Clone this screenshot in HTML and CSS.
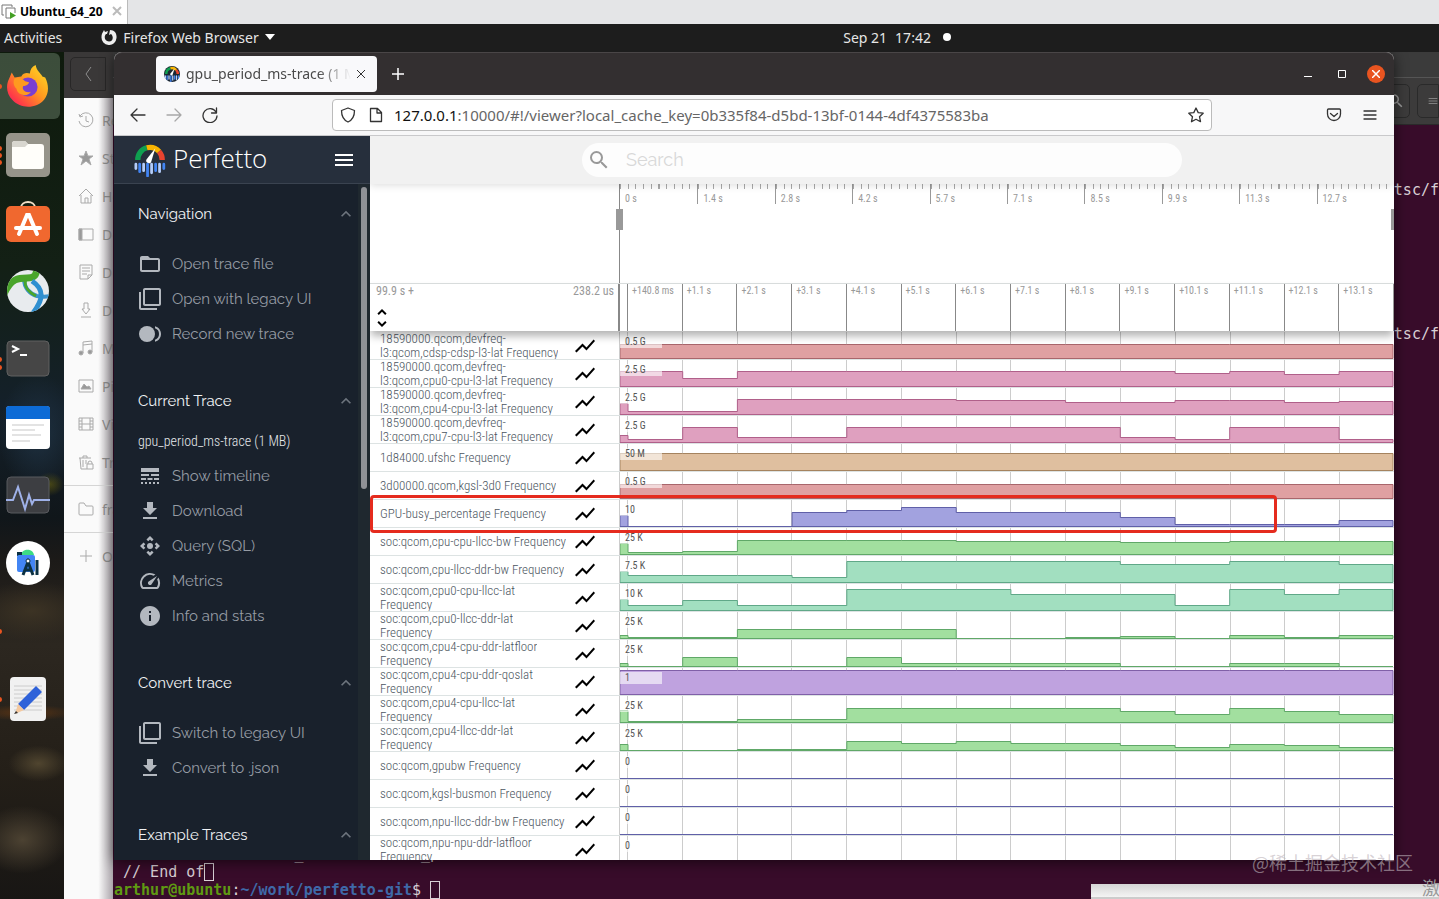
FILE: index.html
```html
<!DOCTYPE html>
<html lang="en">
<head>
    <meta charset="UTF-8">
    <meta name="viewport" content="width=device-width, initial-scale=1.0">
    <title>gpu_period_ms-trace (1 MB) - Perfetto UI</title>
    <link rel="stylesheet" href="styles.css">
</head>
<body>
    <!-- shared icons -->
    <svg class="sprite" aria-hidden="true">
        <symbol id="chart" viewBox="0 0 24 24"><path d="M3.5 18.49l6-6.01 4 4L22 6.92l-1.41-1.41-7.09 7.97-4-4L2 16.99z"/></symbol>
        <symbol id="chevron" viewBox="0 0 24 24"><path d="M12 8l-6 6 1.41 1.41L12 10.83l4.59 4.58L18 14z"/></symbol>
        <symbol id="folder" viewBox="0 0 24 24"><path d="M20 6h-8l-2-2H4c-1.1 0-2 .9-2 2v12c0 1.1.9 2 2 2h16c1.1 0 2-.9 2-2V8c0-1.1-.9-2-2-2zm0 12H4V8h16v10z"/></symbol>
        <symbol id="filter" viewBox="0 0 24 24"><path d="M3 5H1v16c0 1.1.9 2 2 2h16v-2H3V5zm18-4H7c-1.1 0-2 .9-2 2v14c0 1.1.9 2 2 2h14c1.1 0 2-.9 2-2V3c0-1.1-.9-2-2-2zm0 16H7V3h14v14z"/></symbol>
        <symbol id="record" viewBox="0 0 24 24"><circle cx="9" cy="12" r="8"/><path d="M17 4.26v2.09a5.99 5.99 0 0 1 0 11.3v2.09c3.45-.89 6-4.01 6-7.74s-2.55-6.85-6-7.74z"/></symbol>
        <symbol id="lines" viewBox="0 0 24 24"><path d="M3 16h5v-2H3v2zm6.5 0h5v-2h-5v2zm6.5 0h5v-2h-5v2zM3 20h2v-2H3v2zm4 0h2v-2H7v2zm4 0h2v-2h-2v2zm4 0h2v-2h-2v2zm4 0h2v-2h-2v2zM3 12h8v-2H3v2zm10 0h8v-2h-8v2zM3 4v4h18V4H3z"/></symbol>
        <symbol id="download" viewBox="0 0 24 24"><path d="M19 9h-4V3H9v6H5l7 7 7-7zM5 18v2h14v-2H5z"/></symbol>
        <symbol id="control" viewBox="0 0 24 24"><path d="M5.54 8.46L2 12l3.54 3.54 1.76-1.77L5.54 12l1.76-1.77zM12 18.46l-1.77-1.76-1.77 1.76L12 22l3.54-3.54-1.77-1.76zM18.46 8.46l-1.76 1.77L18.46 12l-1.76 1.77 1.76 1.77L22 12zM8.46 5.54l1.77 1.76L12 5.54l1.77 1.76 1.77-1.76L12 2z"/><circle cx="12" cy="12" r="3"/></symbol>
        <symbol id="speed" viewBox="0 0 24 24"><path d="M20.38 8.57l-1.23 1.85a8 8 0 0 1-.22 7.58H5.07A8 8 0 0 1 15.58 6.85l1.85-1.23A10 10 0 0 0 3.35 19a2 2 0 0 0 1.72 1h13.85a2 2 0 0 0 1.74-1 10 10 0 0 0-.27-10.44zM10.59 15.41a2 2 0 0 0 2.83 0l5.66-8.49-8.49 5.66a2 2 0 0 0 0 2.83z"/></symbol>
        <symbol id="info" viewBox="0 0 24 24"><path d="M12 2C6.48 2 2 6.48 2 12s4.48 10 10 10 10-4.48 10-10S17.52 2 12 2zm1 15h-2v-6h2v6zm0-8h-2V7h2v2z"/></symbol>
        <symbol id="search" viewBox="0 0 24 24"><path d="M15.5 14h-.79l-.28-.27A6.47 6.47 0 0 0 16 9.5 6.5 6.5 0 1 0 9.5 16c1.61 0 3.09-.59 4.23-1.57l.27.28v.79l5 4.99L20.49 19l-4.99-5zm-6 0C7.01 14 5 11.99 5 9.5S7.01 5 9.5 5 14 7.01 14 9.5 11.99 14 9.5 14z"/></symbol>
        <symbol id="menu" viewBox="0 0 24 24"><path d="M3 18h18v-2H3v2zm0-5h18v-2H3v2zm0-7v2h18V6H3z"/></symbol>
        <symbol id="perfetto" viewBox="0 0 30 32">
            <g fill="none" stroke-width="5">
                <path d="M3.500 16A11.500 11.500 0 0 1 12 4.500" stroke="#0fa050"/>
                <path d="M12 4.500A11.500 11.500 0 0 1 23.500 8" stroke="#f8b400"/>
                <path d="M23.500 8A11.500 11.500 0 0 1 26.500 16" stroke="#e8432f"/>
            </g>
            <path d="M20 5L12 15a2.500 2.500 0 0 0 4 3z" fill="#fff"/>
            <g stroke-width="2.600" stroke-linecap="round">
                <path d="M1.700 20v4M9 20v6M16.500 20v8M24 20v7" stroke="#b4cdfa"/>
                <path d="M5.300 20v7M12.700 20v11M20.300 20v6M28 20v4" stroke="#4285f4"/>
            </g>
        </symbol>
    </svg>

    <div class="vm-bar">
        <button class="vm-tab">
            <svg width="16" height="16" viewBox="0 0 16 16"><path d="M3 12H1V2h10v2" fill="none" stroke="#777"/><path d="M9 15H5V5h9v5" fill="#fff" stroke="#777"/><path d="M9 9l6 3.500-6 3.500z" fill="#43a024"/></svg>
            <span>Ubuntu_64_20</span>
            <svg class="vm-close" width="10" height="10" viewBox="0 0 10 10"><path d="M1 1l8 8M9 1l-8 8" stroke="#bbb" stroke-width="2"/></svg>
        </button>
    </div>

    <header class="top-bar">
        <button>Activities</button>
        <button class="app-menu">
            <svg width="16" height="16" viewBox="0 0 16 16"><path d="M5 5C3 7 3 12 8 12.500c4 0 5-5 2-7.500L8 6 9 1c5 0 7 4 6.500 8A7.500 7.500 0 0 1 .5 8C.5 6 1 4 2 3l1-2 1 2 3-1-1 3z" fill="#eee"/></svg>
            <span>Firefox Web Browser</span>
            <svg width="10" height="6" viewBox="0 0 10 6"><path d="M0 0h10L5 6z" fill="#fff"/></svg>
        </button>
        <button class="clock"><span>Sep 21</span><span>17:42</span><i class="dot"></i></button>
    </header>

    <main class="desktop">
        <nav class="dock" aria-label="Dock">
            <button class="dock-item active one" aria-label="Firefox">
                <svg viewBox="0 0 44 46">
                    <defs>
                        <linearGradient id="flame" x1="1" y1="0" x2="0" y2="1"><stop offset="0" stop-color="#ffe226"/><stop offset=".45" stop-color="#ff9a1f"/><stop offset=".8" stop-color="#ff3b47"/><stop offset="1" stop-color="#e3206f"/></linearGradient>
                    </defs>
                    <path d="M5 9l3 5 7-1c2-4 6-4 9-3 0-4 2-7 6-9 1 6 5 8 7 12l3 1c4 8 4 17-1 23-8 10-25 10-33 1C-1 31-1 22 2 16z" fill="url(#flame)"/>
                    <circle cx="22" cy="24" r="10" fill="#7a3fd0"/>
                    <path d="M8 15c5-1 8 0 11 3l4 1c0 2-3 4-6 4-2 4 3 8 8 6-3 6-14 4-15-3-3-3-4-7-2-11z" fill="#ff9a1f"/>
                </svg>
            </button>
            <button class="dock-item three" aria-label="Files">
                <svg viewBox="0 0 44 44"><rect width="44" height="44" rx="5" fill="#96948a"/><path d="M6 11a3 3 0 0 1 3-3h10l3 3h13a3 3 0 0 1 3 3v19a3 3 0 0 1-3 3H9a3 3 0 0 1-3-3z" fill="#fffefa"/><path d="M6 13v-2a3 3 0 0 1 3-3h10l3 3-3 3H6z" fill="#d8d6cf"/></svg>
            </button>
            <button class="dock-item" aria-label="Ubuntu Software">
                <svg viewBox="0 0 44 44"><path d="M15 7c0-8 14-8 14 0" fill="none" stroke="#f1dfc6" stroke-width="2"/><rect y="5" width="44" height="36" rx="5" fill="#f0682f"/><g stroke="#fff" stroke-linecap="round" fill="none"><path d="M13 33l8-19h2l8 19" stroke-width="4"/><path d="M10 27h24" stroke-width="4"/></g></svg>
            </button>
            <button class="dock-item" aria-label="Cisco AnyConnect">
                <svg viewBox="0 0 44 44"><defs><clipPath id="ball"><circle cx="22" cy="22" r="21"/></clipPath></defs><circle cx="22" cy="22" r="21" fill="#e8ebee"/><g clip-path="url(#ball)" fill="none"><path d="M18 10c0 9 6 15 13 17 5 1 9 1 14 0" stroke="#3a93cf" stroke-width="4"/><path d="M-2 25C5 9 13 9 21 9s9-3 10-9" stroke="#4aa52b" stroke-width="7"/><path d="M20 10c-3 8 4 14 10 17" stroke="#4aa52b" stroke-width="3"/><path d="M26 12c12 8 12 18 1 32" stroke="#2f8fd0" stroke-width="5"/></g></svg>
            </button>
            <button class="dock-item two" aria-label="Terminal">
                <svg viewBox="0 0 44 44"><rect x="1" y="4" width="42" height="35" rx="4" fill="#464646" stroke="#606060"/><path d="M6 9l6 3-6 3" fill="none" stroke="#fff" stroke-width="2"/><path d="M14 18h7" stroke="#fff" stroke-width="2"/></svg>
            </button>
            <button class="dock-item" aria-label="Writer">
                <svg viewBox="0 0 44 44"><rect y="1" width="44" height="43" rx="4" fill="#fff"/><path d="M0 14V4a3 3 0 0 1 3-3h38a3 3 0 0 1 3 3v10z" fill="#0d6bd6"/><path d="M6 20h32M6 25h23M6 30h29M6 36h18" stroke="#e3e3e3" stroke-width="2"/></svg>
            </button>
            <button class="dock-item" aria-label="System Monitor">
                <svg viewBox="0 0 44 44"><rect x="1" y="4" width="42" height="36" rx="4" fill="#3d3e42" stroke="#595a5f"/><path d="M0 27h7l5-13 7 22 4-14 3 9 2-4h16" fill="none" stroke="#9fb1e8" stroke-width="2"/></svg>
            </button>
            <button class="dock-item" aria-label="Android Studio">
                <svg viewBox="0 0 44 44"><circle cx="22" cy="22" r="22" fill="#fff"/><path d="M15 14c1-7 12-7 13 0z" fill="#3ddc84"/><path d="M11 11h5v4h-5z" fill="#0b3042"/><rect x="11" y="14" width="18" height="17" rx="2" fill="#4285f4"/><path d="M17 34l5-13 5 13M19 29h6M31 19v15" fill="none" stroke="#0b3042" stroke-width="3"/><circle cx="22" cy="20" r="2" fill="#fff" stroke="#0b3042"/></svg>
            </button>
            <button class="dock-item one" aria-label="Running application"></button>
            <button class="dock-item one" aria-label="Text Editor">
                <svg viewBox="0 0 44 44"><rect x="4" width="36" height="44" rx="4" fill="#f1f1f1"/><path d="M8 9h28M8 13h28M8 17h28M8 21h28M8 25h28M8 29h28M8 33h28" stroke="#ccc"/><path d="M30 9l6 6-18 18-6-6z" fill="#2f62d9"/><path d="M12 27l6 6-9 4z" fill="#f4c9a0"/><path d="M10 34l2 2-4 1z" fill="#333"/></svg>
            </button>
        </nav>

        <section class="files" aria-label="Files">
            <div class="files-head"><button aria-label="Back"><svg width="8" height="16" viewBox="0 0 8 16"><path d="M7 1L2 8l5 7" fill="none" stroke="#8d8d8d"/></svg></button></div>
            <div class="places">
                <a href="#"><svg viewBox="0 0 16 16"><path d="M2 4a7 7 0 1 1-1 5M1 2l1 3 3-1M8 4v5l3 1"/></svg>Recent</a>
                <a href="#"><svg viewBox="0 0 16 16"><path d="M8 1l2 5h5l-4 3 2 6-5-4-5 4 2-6-4-3h5z" fill="#999"/></svg>Starred</a>
                <a href="#"><svg viewBox="0 0 16 16"><path d="M1 8l7-7 7 7M3 7v8h10V7M7 15v-5h3v5"/></svg>Home</a>
                <a href="#"><svg viewBox="0 0 16 16"><path d="M1 3h14v11H1z"/><path d="M1 3h3v11H1z" fill="#999"/></svg>Desktop</a>
                <a href="#"><svg viewBox="0 0 16 16"><path d="M2 1h12v10l-4 4H2zM4 4h8M4 7h8M4 10h5M10 15v-4h4"/></svg>Documents</a>
                <a href="#"><svg viewBox="0 0 16 16"><path d="M6 1h4v6h2l-4 5-4-5h2zM3 15h10"/></svg>Downloads</a>
                <a href="#"><svg viewBox="0 0 16 16"><path d="M5 13V2l9-1v11M5 5l9-1"/><circle cx="3" cy="13" r="2" fill="#999"/><circle cx="12" cy="12" r="2" fill="#999"/></svg>Music</a>
                <a href="#"><svg viewBox="0 0 16 16"><path d="M1 2h14v12H1z"/><path d="M3 11l3-5 3 3 2-1 2 3z" fill="#999"/></svg>Pictures</a>
                <a href="#"><svg viewBox="0 0 16 16"><path d="M1 2h14v12H1zM4 2v12M12 2v12M4 8h8M1 5h3M1 8h3M1 11h3M12 5h3M12 8h3M12 11h3"/></svg>Videos</a>
                <a href="#"><svg viewBox="0 0 16 16"><path d="M1 4h12M5 4V2h4v2M2 4l1 11h6M5 6v7M8 6v4M10 10v-1a2 2 0 0 1 4 0v1M9 10h6v5H9z"/></svg>Trash</a>
                <hr>
                <a href="#"><svg viewBox="0 0 16 16"><path d="M1 13V3q0-1 1-1h4l2 3h6q1 0 1 1v7q0 1-1 1H2q-1 0-1-1z"/></svg>framework</a>
                <hr>
                <a href="#"><svg viewBox="0 0 16 16"><path d="M8 2v12M2 8h12"/></svg>Other Locations</a>
            </div>
        </section>

        <section class="terminal" aria-label="Terminal">
            <div class="terminal-title"></div>
            <div class="terminal-head">
                <button aria-label="Search"><svg width="18" height="18" fill="#999"><use href="#search"/></svg></button>
                <button aria-label="Menu"><svg width="16" height="16" viewBox="0 0 16 16"><path d="M1 4h14M1 8h14M1 12h14" stroke="#aaa"/></svg></button>
            </div>
            <div class="terminal-side"><span>tsc/f</span><span>tsc/f</span></div>
            <pre class="terminal-text">          cat /trace_18241.2/trace_processor.Main
 // End of<i class="cursor"></i>
<b class="user">arthur@ubuntu</b>:<b class="path">~/work/perfetto-git</b>$ <i class="cursor"></i></pre>
            <div class="popup"></div>
        </section>

        <section class="browser" aria-label="Firefox">
            <div class="tab-bar">
                <div class="tab">
                    <svg width="16" height="16" viewBox="0 0 30 30"><circle cx="15" cy="15" r="15" fill="#1b2733"/><use href="#perfetto" width="30" height="30"/></svg>
                    <span>gpu_period_ms-trace (1 MB) - Perfetto UI</span>
                    <button aria-label="Close tab"><svg width="8" height="8" viewBox="0 0 8 8"><path d="M0 0l8 8M8 0L0 8" stroke="#333"/></svg></button>
                </div>
                <button class="new-tab" aria-label="New tab"><svg width="12" height="12" viewBox="0 0 12 12"><path d="M6 0v12M0 6h12" stroke="#fff" stroke-width="1.500"/></svg></button>
                <div class="window-buttons">
                    <button aria-label="Minimize"><svg width="8" height="12" viewBox="0 0 8 12"><path d="M0 8.500h8" stroke="#fff"/></svg></button>
                    <button aria-label="Maximize"><svg width="8" height="8" viewBox="0 0 8 8"><path d="M.5.5h7v7h-7z" fill="none" stroke="#fff"/></svg></button>
                    <button class="close" aria-label="Close"><svg width="8" height="8" viewBox="0 0 8 8"><path d="M0 0l8 8M8 0L0 8" stroke="#fff" stroke-width="1.500"/></svg></button>
                </div>
            </div>

            <div class="toolbar">
                <button aria-label="Back"><svg width="16" height="16" viewBox="0 0 16 16"><path d="M15 8H1m6-6L1 8l6 6"/></svg></button>
                <button class="disabled" aria-label="Forward"><svg width="16" height="16" viewBox="0 0 16 16"><path d="M1 8h14M9 2l6 6-6 6"/></svg></button>
                <button aria-label="Reload"><svg width="16" height="16" viewBox="0 0 16 16"><path d="M14 5a7 7 0 1 0 1 4M14.500 1v5h-5"/></svg></button>
                <div class="url-bar">
                    <svg width="16" height="16" viewBox="0 0 16 16"><path d="M8 1l6.500 2.500c0 6-2 9.500-6.500 11.500-4.500-2-6.500-5.500-6.500-11.500z"/></svg>
                    <svg width="16" height="16" viewBox="0 0 16 16"><path d="M2.500 1.500h7l4 4v9h-11zM9 2v4h4"/></svg>
                    <label for="url">127.0.0.1</label><input id="url" type="text" value=":10000/#!/viewer?local_cache_key=0b335f84-d5bd-13bf-0144-4df4375583ba">
                    <button aria-label="Bookmark"><svg width="16" height="16" viewBox="0 0 16 16"><path d="M8 1l2.200 4.600 5 .6-3.700 3.500 1 5L8 12.300l-4.500 2.400 1-5L.8 6.200l5-.6z"/></svg></button>
                </div>
                <div class="toolbar-end">
                    <button aria-label="Pocket"><svg width="16" height="16" viewBox="0 0 16 16"><path d="M2.500 2h11q1 0 1 1v4a6.500 6.500 0 0 1-13 0V3q0-1 1-1zM4.500 6.500L8 9.500l3.500-3"/></svg></button>
                    <button aria-label="Application menu"><svg width="16" height="16" viewBox="0 0 16 16"><path d="M2 4h12M2 8h12M2 12h12"/></svg></button>
                </div>
            </div>

            <div class="page">
                <aside class="sidebar">
                    <header class="brand">
                        <svg class="logo" width="32" height="34"><use href="#perfetto"/></svg>
                        <span>Perfetto</span>
                        <button aria-label="Toggle menu"><svg width="24" height="24"><use href="#menu"/></svg></button>
                    </header>
                    <div class="sidebar-body">
                        <div class="sections">
                            <section>
                                <button class="section-title">Navigation<svg><use href="#chevron"/></svg></button>
                                <a href="#"><svg><use href="#folder"/></svg>Open trace file</a>
                                <a href="#"><svg><use href="#filter"/></svg>Open with legacy UI</a>
                                <a href="#"><svg><use href="#record"/></svg>Record new trace</a>
                            </section>
                            <section>
                                <button class="section-title">Current Trace<svg><use href="#chevron"/></svg></button>
                                <p class="trace-name">gpu_period_ms-trace (1 MB)</p>
                                <a href="#"><svg><use href="#lines"/></svg>Show timeline</a>
                                <a href="#"><svg><use href="#download"/></svg>Download</a>
                                <a href="#"><svg><use href="#control"/></svg>Query (SQL)</a>
                                <a href="#"><svg><use href="#speed"/></svg>Metrics</a>
                                <a href="#"><svg><use href="#info"/></svg>Info and stats</a>
                            </section>
                            <section>
                                <button class="section-title">Convert trace<svg><use href="#chevron"/></svg></button>
                                <a href="#"><svg><use href="#filter"/></svg>Switch to legacy UI</a>
                                <a href="#"><svg><use href="#download"/></svg>Convert to .json</a>
                            </section>
                            <section>
                                <button class="section-title">Example Traces<svg><use href="#chevron"/></svg></button>
                            </section>
                        </div>
                        <div class="scrollbar"><div class="thumb"></div></div>
                    </div>
                </aside>

                <div class="viewer">
                    <div class="omnibox-bar">
                        <div class="omnibox">
                            <svg width="24" height="24"><use href="#search"/></svg>
                            <input type="text" placeholder="Search" aria-label="Search">
                        </div>
                    </div>
                    <div class="overview">
                        <div class="overview-ruler" id="overview"></div>
                    </div>
                    <div class="time-axis">
                        <div class="axis-shell">
                            <span>99.9 s +</span><span>238.2 us</span>
                            <button aria-label="Expand all"><svg width="24" height="24" viewBox="0 0 24 24"><path d="M12 5.830L15.170 9l1.410-1.410L12 3 7.410 7.590 8.830 9 12 5.830zm0 12.340L8.830 15l-1.410 1.410L12 21l4.590-4.590L15.170 15 12 18.170z"/></svg></button>
                        </div>
                        <div class="axis-ruler" id="axis"></div>
                    </div>
                    <div class="tracks" id="tracks">
                        <div class="highlight"></div>
                    </div>
                </div>
            </div>
        </section>

        <div class="watermark">@稀土掘金技术社区</div>
        <div class="activate">激活</div>
    </main>

    <script>
        const overviewTimes = ['0 s', '1.4 s', '2.8 s', '4.2 s', '5.7 s', '7.1 s', '8.5 s', '9.9 s', '11.3 s', '12.7 s'];
        const axisTimes = ['+140.8 ms', '+1.1 s', '+2.1 s', '+3.1 s', '+4.1 s', '+5.1 s', '+6.1 s', '+7.1 s', '+8.1 s', '+9.1 s', '+10.1 s', '+11.1 s', '+12.1 s', '+13.1 s'];

        // name, scale, colour, counter value of each second (0 - 26)
        const tracks = [
            ['18590000.qcom,devfreq-<br>l3:qcom,cdsp-cdsp-l3-lat Frequency', '0.5 G', 'red', [14]],
            ['18590000.qcom,devfreq-<br>l3:qcom,cpu0-cpu-l3-lat Frequency', '2.5 G', 'pink', [15, 15, 8, 15, 15, 15, 15, 15, 15, 15, 15, 13, 15, 12, 15]],
            ['18590000.qcom,devfreq-<br>l3:qcom,cpu4-cpu-l3-lat Frequency', '2.5 G', 'pink', [11, 3, 3, 15, 15, 15, 15, 14, 14, 12, 12, 14, 14, 12, 13]],
            ['18590000.qcom,devfreq-<br>l3:qcom,cpu7-cpu-l3-lat Frequency', '2.5 G', 'pink', [7, 3, 15, 5, 5, 15, 15, 15, 15, 15, 5, 3, 15, 15, 3]],
            ['1d84000.ufshc Frequency', '50 M', 'tan', [17]],
            ['3d00000.qcom,kgsl-3d0 Frequency', '0.5 G', 'red', [14]],
            ['GPU-busy_percentage Frequency', '10', 'blue', [11, 0, 0, 0, 14, 16, 19, 14, 14, 14, 9, 2, 2, 2, 6]],
            ['soc:qcom,cpu-cpu-llcc-bw Frequency', '25 K', 'green', [11, 2, 3, 14, 14, 14, 14, 13, 13, 13, 12, 12, 13, 13, 13]],
            ['soc:qcom,cpu-llcc-ddr-bw Frequency', '7.5 K', 'teal', [11, 7, 7, 7, 5, 21, 21, 21, 21, 21, 18, 18, 21, 21, 18]],
            ['soc:qcom,cpu0-cpu-llcc-lat<br>Frequency', '10 K', 'teal', [11, 5, 10, 5, 5, 21, 21, 21, 16, 16, 16, 5, 21, 16, 21]],
            ['soc:qcom,cpu0-llcc-ddr-lat<br>Frequency', '25 K', 'green', [3, 1, 1, 9, 9, 9, 9, 0, 0, 1, 2, 0, 3, 1, 3]],
            ['soc:qcom,cpu4-cpu-ddr-latfloor<br>Frequency', '25 K', 'green', [3, 0, 9, 0, 0, 9, 3, 3, 3, 3, 0, 0, 3, 3, 0]],
            ['soc:qcom,cpu4-cpu-ddr-qoslat<br>Frequency', '1', 'purple', [24]],
            ['soc:qcom,cpu4-cpu-llcc-lat<br>Frequency', '25 K', 'green', [12, 1, 1, 3, 3, 14, 14, 14, 14, 14, 11, 8, 14, 11, 8]],
            ['soc:qcom,cpu4-llcc-ddr-lat<br>Frequency', '25 K', 'green', [6, 0, 0, 1, 1, 9, 7, 9, 7, 7, 5, 3, 6, 5, 3]],
            ['soc:qcom,gpubw Frequency', '0', 'blue', [0]],
            ['soc:qcom,kgsl-busmon Frequency', '0', 'blue', [0]],
            ['soc:qcom,npu-llcc-ddr-bw Frequency', '0', 'blue', [0]],
            ['soc:qcom,npu-npu-ddr-latfloor<br>Frequency', '0', 'blue', [0]]
        ];

        function stepPath(values) {
            const base = 26.5;
            let d = 'M0 ' + base;
            for (let i = 0; i < 15; i++) {
                const value = values.length === 1 ? values[0] : values[i];
                const from = i === 0 ? 0 : 8 + (i - 1) * 54.7;
                const to = i === 14 ? 773 : 8 + i * 54.7;
                d += ' L' + from + ' ' + (base - value) + ' L' + to + ' ' + (base - value);
            }
            return d + ' L773 ' + base + ' Z';
        }

        document.getElementById('overview').innerHTML = overviewTimes.map(t => '<span>' + t + '</span>').join('');
        document.getElementById('axis').innerHTML = axisTimes.map(t => '<span>' + t + '</span>').join('');

        const container = document.getElementById('tracks');
        tracks.forEach(([name, scale, color, values]) => {
            const row = document.createElement('div');
            row.className = 'track';
            row.innerHTML =
                '<div class="track-shell"><h1>' + name + '</h1>' +
                '<button aria-label="Chart mode"><svg width="24" height="24"><use href="#chart"/></svg></button></div>' +
                '<div class="track-content">' +
                '<div class="grid">' + '<i></i>'.repeat(14) + '</div>' +
                '<svg class="' + color + '" viewBox="0 0 774 28" preserveAspectRatio="none">' +
                '<path d="' + stepPath(values) + '"/></svg>' +
                '<span class="scale">' + scale + '</span></div>';
            container.appendChild(row);
        });
    </script>
</body>
</html>
```
FILE: styles.css
```css
* {
    box-sizing: border-box;
}

body {
    display: flex;
    flex-direction: column;
    height: 100vh;
    margin: 0;
    overflow: hidden;
    font-family: "Noto Sans", "Noto Sans CJK SC", sans-serif;
    font-size: 14px;
    background-color: #1d1d1d;
}

button {
    display: flex;
    align-items: center;
    justify-content: center;
    margin: 0;
    padding: 0;
    border: none;
    background: none;
    color: inherit;
    font: inherit;
    cursor: pointer;
}

input {
    min-width: 0;
    padding: 0;
    border: none;
    outline: none;
    background: none;
    font: inherit;
}

a {
    color: inherit;
    text-decoration: none;
}

.sprite {
    position: absolute;
    width: 0;
    height: 0;
}

/* virtual machine tab */
.vm-bar {
    display: flex;
    flex: none;
    height: 24px;
    background-color: #e4e5e7;
}

.vm-tab {
    gap: 3px;
    padding: 0 5px 2px 1px;
    border-right: 1px solid #bbb;
    background-color: #fff;
    font-size: 12px;
    font-weight: bold;
}

.vm-close {
    margin-left: 6px;
}

/* gnome top bar */
.top-bar {
    display: grid;
    grid-template-columns: auto 1.6fr auto 1fr;
    flex: none;
    align-items: center;
    height: 28px;
    padding: 0 0 2px 4px;
    background-color: #1d1d1d;
    color: #e6e6e6;
}

.app-menu {
    justify-self: start;
    gap: 6px;
    margin-left: 39px;
}

.clock {
    gap: 8px;
}

.dot {
    width: 8px;
    height: 8px;
    margin-left: 4px;
    border-radius: 50%;
    background-color: #fff;
}

.desktop {
    position: relative;
    flex: 1;
    min-height: 0;
    overflow: hidden;
}

/* dock */
.dock {
    width: 64px;
    height: 100%;
    padding-top: 1px;
    background:
        radial-gradient(40px 60px at 60% 45%, #1e3040, transparent),
        radial-gradient(14px 12px at 78% 51%, #4a4712, transparent),
        radial-gradient(50px 8px at 40% 78%, #5a3414, transparent),
        radial-gradient(30px 18px at 60% 84%, #50452f, transparent),
        radial-gradient(46px 34px at 35% 93%, #4c4232, transparent),
        radial-gradient(60px 30px at 50% 66%, #3c3324, transparent),
        linear-gradient(#0e1a0c, #132015 25%, #14202a 42%, #10161a 55%, #1c1a18 60%, #2c2720 70%, #241f18 85%, #181614);
}

.dock-item {
    position: relative;
    width: 56px;
    height: 68px;
}

.dock-item svg {
    width: 44px;
    height: 44px;
}

.dock-item.active {
    width: 60px;
    height: 66px;
    margin-bottom: 2px;
    padding-right: 4px;
    border-radius: 0 6px 6px 0;
    background-color: rgba(130, 155, 130, 0.4);
}

.one::before,
.two::before,
.three::before {
    content: "";
    position: absolute;
    left: -3px;
    width: 5px;
    height: 5px;
    border-radius: 50%;
    background-color: #e95420;
}

.two::before {
    box-shadow: 0 8px #e95420;
}

.three::before {
    box-shadow: 0 -7px #e95420, 0 7px #e95420;
}

/* file manager behind the browser */
.files {
    position: absolute;
    top: 0;
    bottom: 0;
    left: 64px;
    width: 49px;
    overflow: hidden;
    background: linear-gradient(90deg, #fafafa 70%, #aaa4aa);
}

.files-head {
    height: 46px;
    padding: 5px 6px;
    background-color: #3a3838;
}

.files-head button {
    width: 36px;
    height: 34px;
    border: 1px solid #282727;
    border-radius: 5px 0 0 5px;
}

.places {
    padding-top: 3px;
    color: #8b8b8b;
}

.places a {
    display: flex;
    align-items: center;
    gap: 8px;
    height: 38px;
    padding-left: 14px;
    white-space: nowrap;
}

.places svg {
    flex: none;
    width: 16px;
    height: 16px;
    fill: none;
    stroke: #aaa;
}

.places hr {
    margin: 4px 0;
    border: none;
    border-top: 1px solid #d5d5d5;
}

/* terminal behind the browser */
.terminal {
    position: absolute;
    top: 0;
    right: 0;
    bottom: 0;
    left: 113px;
    display: flex;
    flex-direction: column;
    background-color: #380c2a;
    color: #d8d0d5;
    font-family: "DejaVu Sans Mono", monospace;
    font-size: 15px;
    line-height: 18px;
}

.terminal-title {
    height: 26px;
    border-bottom: 1px solid #555;
    background-color: #3b3b3b;
}

.terminal-head {
    display: flex;
    justify-content: flex-end;
    gap: 7px;
    height: 47px;
    padding: 6px 0;
    border-bottom: 1px solid #2a2a2a;
    background-color: #3c3b3b;
}

.terminal-head button {
    width: 38px;
    padding-left: 10px;
    border: 1px solid #2a2a2a;
    border-radius: 5px;
}

.terminal-head button:last-child {
    width: 22px;
    overflow: hidden;
    border-radius: 5px 0 0 5px;
}

.terminal-side {
    display: flex;
    flex: 1;
    flex-direction: column;
    align-items: flex-end;
    gap: 126px;
    padding-top: 56px;
}

.terminal-text {
    margin: 0;
    padding-left: 1px;
    font: inherit;
}

.user {
    color: #5f9a12;
}

.path {
    color: #3f69a8;
}

.cursor {
    display: inline-block;
    width: 10px;
    height: 18px;
    border: 1px solid #d8d0d5;
    vertical-align: top;
}

.popup {
    position: absolute;
    right: 0;
    bottom: 0;
    width: 348px;
    height: 15px;
    border-bottom: 2px solid #ccc;
    background: linear-gradient(#d5d5d5, #f4f4f4);
}

/* firefox */
.browser {
    position: absolute;
    top: 0;
    right: 45px;
    bottom: 39px;
    left: 114px;
    display: flex;
    flex-direction: column;
    border-radius: 8px 8px 0 0;
    box-shadow: 0 2px 14px rgba(0, 0, 0, 0.6);
    background-color: #fff;
}

.tab-bar {
    display: flex;
    flex: none;
    align-items: center;
    height: 43px;
    padding: 0 0 1px 42px;
    border-top: 1px solid #4a4647;
    border-radius: 8px 8px 0 0;
    background-color: #332f30;
}

.tab {
    display: flex;
    align-items: center;
    gap: 6px;
    width: 221px;
    height: 36px;
    padding: 0 12px 0 8px;
    border-radius: 4px;
    background-color: #f9f9fb;
    color: #4a4a4a;
}

.tab span {
    flex: 1;
    overflow: hidden;
    white-space: nowrap;
    mask-image: linear-gradient(90deg, #000 80%, transparent);
}

.new-tab {
    margin-left: 15px;
}

.window-buttons {
    display: flex;
    align-items: center;
    gap: 16px;
    margin-left: auto;
    padding-right: 9px;
}

.window-buttons button {
    width: 18px;
    height: 18px;
}

.window-buttons .close {
    border-radius: 50%;
    background-color: #e95420;
}

.toolbar {
    display: grid;
    grid-template-columns: 36px 36px 36px minmax(0, 984px) 1fr;
    flex: none;
    align-items: center;
    height: 41px;
    padding: 0 16px 0 6px;
    border-bottom: 1px solid #c9c9cb;
    background-color: #f7f7f8;
}

.toolbar svg {
    flex: none;
    fill: none;
    stroke: #333;
    stroke-linecap: round;
    stroke-linejoin: round;
    stroke-width: 1.3px;
}

.toolbar .disabled {
    opacity: 0.4;
}

.url-bar {
    display: flex;
    align-items: center;
    height: 32px;
    margin-left: 104px;
    padding: 0 7px;
    border: 1px solid #bbb;
    border-radius: 4px;
    background-color: #fff;
    color: #111;
    font-size: 15px;
}

.url-bar svg + svg {
    margin: 0 10px 0 12px;
}

.url-bar input {
    flex: 1;
    color: #666;
}

.toolbar-end {
    display: flex;
    justify-content: flex-end;
    gap: 20px;
}

.page {
    display: flex;
    flex: 1;
    min-height: 0;
}

/* perfetto sidebar */
.sidebar {
    display: flex;
    flex: none;
    flex-direction: column;
    width: 256px;
    overflow: hidden;
    background-color: #19212c;
    color: #fff;
}

.brand {
    display: flex;
    flex: none;
    align-items: center;
    height: 48px;
    padding: 0 14px 0 20px;
    border-bottom: 1px solid #3a4350;
    background-color: #262f3c;
    font-family: "Open Sans", sans-serif;
    font-size: 26px;
    font-weight: 300;
    line-height: 44px;
}

.brand span {
    padding-bottom: 3px;
}

.logo {
    margin-right: 7px;
}

.brand button {
    margin-left: auto;
    fill: #fff;
}

.sidebar-body {
    display: flex;
    flex: 1;
    min-height: 0;
}

.sections {
    flex: 1;
    padding-top: 1px;
    font-family: Raleway, Lato, sans-serif;
    font-size: 15px;
}

.sections section {
    margin-bottom: 21px;
}

.section-title {
    justify-content: space-between;
    width: 100%;
    height: 61px;
    padding: 0 2px 3px 24px;
    color: #f0f2f4;
}

.section-title svg {
    width: 20px;
    height: 20px;
    fill: #6d747d;
}

.sections a {
    display: flex;
    align-items: center;
    gap: 10px;
    height: 35px;
    padding-left: 24px;
    color: #969ca4;
}

.sections a svg {
    width: 24px;
    height: 24px;
    fill: #b3b8bf;
}

.trace-name {
    margin: 0;
    padding: 0 0 8px 24px;
    color: #e5e8eb;
    font-family: "Roboto Condensed", Roboto, sans-serif;
    font-size: 14px;
    font-weight: 300;
    line-height: 17px;
}

.scrollbar {
    width: 12px;
    padding: 3px;
    background-color: #1f282f;
}

.thumb {
    width: 6px;
    height: 45%;
    border-radius: 3px;
    background-color: #8f9196;
}

/* perfetto viewer */
.viewer {
    display: flex;
    flex: 1;
    flex-direction: column;
    min-width: 0;
    overflow: hidden;
    color: #999;
    font-family: "Roboto Condensed", Roboto, sans-serif;
}

.omnibox-bar {
    z-index: 2;
    display: flex;
    flex: none;
    align-items: center;
    justify-content: center;
    height: 48px;
    background-color: #f1f1f1;
    box-shadow: 0 1px 8px rgba(0, 0, 0, 0.15);
}

.omnibox {
    display: flex;
    align-items: center;
    gap: 15px;
    width: 600px;
    height: 34px;
    padding: 0 5px 1px;
    border-radius: 17px;
    background-color: #fdfdfd;
    fill: #999;
}

.omnibox input {
    flex: 1;
    font-family: Raleway, Lato, sans-serif;
    font-size: 18px;
}

.omnibox input::placeholder {
    color: #d8d8d8;
}

.overview {
    position: relative;
    flex: none;
    height: 99px;
    padding-left: 249px;
}

/* brush handles at both ends of the selected range */
.overview::before,
.overview::after {
    content: "";
    position: absolute;
    top: 25px;
    left: 246px;
    width: 7px;
    height: 21px;
    background-color: #999;
}

.overview::after {
    left: auto;
    right: 0;
    width: 3px;
}

.overview-ruler {
    display: grid;
    grid-template-columns: repeat(10, 1fr);
    height: 100%;
    border-left: 1px solid #888;
    font-size: 10px;
}

.overview-ruler span {
    height: 20px;
    padding: 9px 0 0 5px;
    background: repeating-linear-gradient(90deg, #aaa 0 1px, transparent 1px 10%) 0 0 / 100% 5px no-repeat;
    line-height: 12px;
}

.overview-ruler span + span {
    border-left: 1px solid #999;
}

.time-axis {
    z-index: 1;
    display: flex;
    flex: none;
    height: 48px;
    border-top: 1px solid #d8dcdc;
    background-color: #fff;
    box-shadow: 0 6px 8px -1px rgba(0, 0, 0, 0.3);
}

.axis-shell {
    display: grid;
    grid-template-columns: 1fr auto;
    align-content: start;
    width: 250px;
    padding: 0 4px 0 6px;
    border-right: 2px solid #888;
    font-size: 12px;
    line-height: 15px;
}

.axis-shell button {
    width: 12px;
    height: 28px;
    padding-top: 10px;
}

.axis-shell svg {
    flex: none;
    fill: #000;
}

.axis-ruler {
    display: grid;
    flex: 1;
    grid-template-columns: repeat(14, minmax(0, 1fr));
    padding-left: 7px;
    border-right: 1px solid #999;
    font-size: 10px;
    line-height: 14px;
}

.axis-ruler span {
    padding-left: 4px;
    border-left: 1px solid #888;
    white-space: nowrap;
}

.tracks {
    position: relative;
    flex: 1;
    min-height: 0;
    padding-top: 1px;
    overflow: hidden;
}

.track {
    display: flex;
    height: 28px;
    border-bottom: 1px solid #dde3e3;
}

.track-shell {
    display: flex;
    flex: none;
    align-items: center;
    justify-content: space-between;
    width: 250px;
    padding: 0 22px 0 10px;
    border-right: 1px solid #ccc;
}

.track-shell h1 {
    max-height: 27px;
    margin: 0;
    overflow: hidden;
    color: #4b5560;
    font-size: 13px;
    font-weight: 300;
    line-height: 14px;
    white-space: nowrap;
}

.track-shell svg {
    fill: #000;
}

.track-content {
    position: relative;
    flex: 1;
    min-width: 0;
}

.track-content svg {
    position: relative;
    display: block;
    width: 100%;
    height: 28px;
}

.track-content path {
    vector-effect: non-scaling-stroke;
}

.grid {
    position: absolute;
    top: 0;
    right: 0;
    bottom: 0;
    left: 7px;
    display: grid;
    grid-template-columns: repeat(14, minmax(0, 1fr));
}

.grid i {
    border-left: 1px solid #ccc;
}

.scale {
    position: absolute;
    top: 4px;
    left: 0;
    width: 42px;
    padding-left: 5px;
    background-color: rgba(255, 255, 255, 0.6);
    color: #555;
    font-size: 10px;
    line-height: 12px;
}

.red {
    fill: #dfa0a2;
    stroke: #a8666c;
}

.pink {
    fill: #dfa0bf;
    stroke: #b0608a;
}

.tan {
    fill: #dfbf9f;
    stroke: #a5835f;
}

.blue {
    fill: #a2a2df;
    stroke: #6060a8;
}

.green {
    fill: #a2df9f;
    stroke: #60a868;
}

.teal {
    fill: #a2dfc0;
    stroke: #60a888;
}

.purple {
    fill: #bfa2df;
    stroke: #8060a8;
}

.highlight {
    position: absolute;
    z-index: 1;
    top: 164px;
    left: 0;
    width: 88.6%;
    height: 38px;
    border: 3px solid #e52b1e;
    border-radius: 4px;
}

.watermark {
    position: absolute;
    right: 26px;
    bottom: 23px;
    color: rgba(190, 180, 187, 0.6);
    font-family: "Noto Sans CJK SC", sans-serif;
    font-size: 18px;
    line-height: 28px;
}

.activate {
    position: absolute;
    bottom: 0;
    left: calc(100% - 17px);
    color: #999;
    font-family: "Noto Sans CJK SC", sans-serif;
    font-size: 18px;
    line-height: 24px;
    white-space: nowrap;
}
```
